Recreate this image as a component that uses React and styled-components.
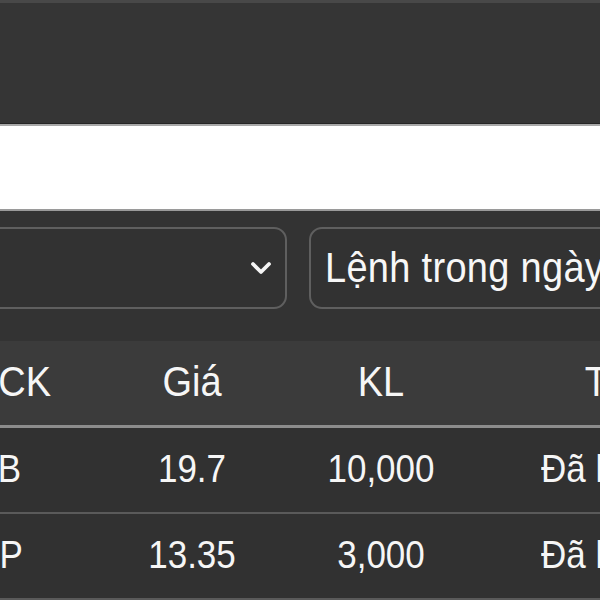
import React from "react";
import styled, { createGlobalStyle } from "styled-components";

const Global = createGlobalStyle`
  html, body {
    margin: 0;
    padding: 0;
    background: #333333;
    overflow: hidden;
    font-family: "Liberation Sans", Arial, sans-serif;
  }
`;

const Page = styled.div`
  width: 600px;
  height: 600px;
  overflow: hidden;
  background: #333333;
  display: flex;
  flex-direction: column;
`;

const TopBar = styled.div`
  height: 120px;
  flex: none;
  background: #353535;
  border-top: 3px solid #484848;
  border-bottom: 1px solid #252525;
`;

const WhiteBand = styled.div`
  height: 83px;
  flex: none;
  background: #ffffff;
  border-top: 2px solid #a8a8a8;
  border-bottom: 2px solid #9a9a9a;
`;

const Content = styled.div`
  margin-left: -70px;
  width: 810px;
  display: flex;
  flex-direction: column;
  padding-top: 16px;
  gap: 32px;
`;

const FilterRow = styled.div`
  display: grid;
  grid-template-columns: 357px 358px;
  gap: 22px;
`;

const Select = styled.div`
  height: 82px;
  box-sizing: border-box;
  border: 2px solid #5f5f5f;
  border-radius: 13px;
  background: #323232;
  display: flex;
  align-items: center;
  justify-content: ${(p) => (p.$chevron ? "flex-end" : "flex-start")};
  padding: 0 13px 0 14px;
  color: #f7f7f7;
  font-size: 38px;
  white-space: nowrap;
  overflow: hidden;
`;

const Tall = styled.span`
  display: inline-block;
  transform: scaleY(1.1);
  transform-origin: center;
  letter-spacing: ${(p) => p.$ls || "0"};
`;

const Chevron = () => (
  <svg width="22" height="14" viewBox="0 0 22 14">
    <polyline
      points="3,3 11,11 19,3"
      fill="none"
      stroke="#f5f5f5"
      strokeWidth="3.8"
      strokeLinecap="round"
      strokeLinejoin="round"
    />
  </svg>
);

const Table = styled.div`
  display: flex;
  flex-direction: column;
`;

const Row = styled.div`
  display: grid;
  grid-template-columns: 170px 184px 194px 260px;
  height: ${(p) => (p.$head ? "83px" : "82px")};
  padding-bottom: ${(p) => (p.$head ? "1px" : "2px")};
  align-items: center;
  background: ${(p) => (p.$head ? "#3b3b3b" : "#313131")};
  border-bottom: ${(p) => (p.$head ? "3px solid #8c8c8c" : "2px solid #5a5a5a")};
  color: #f6f6f6;
  font-size: ${(p) => (p.$head ? "38px" : "35px")};
  white-space: nowrap;
`;

const Cell = styled.div`
  text-align: ${(p) => p.$align || "center"};
  padding-left: ${(p) => p.$pad || "0"};
`;

const rows = [
  { code: "TCB", price: "19.7", vol: "10,000", status: "Đã khớp" },
  { code: "DXP", price: "13.35", vol: "3,000", status: "Đã khớp" },
];

export default function App() {
  return (
    <>
      <Global />
      <Page>
        <TopBar />
        <WhiteBand />
        <Content>
          <FilterRow>
            <Select $chevron>
              <Chevron />
            </Select>
            <Select>
              <Tall $ls="0.3px">Lệnh trong ngày</Tall>
            </Select>
          </FilterRow>
          <Table>
            <Row $head>
              <Cell $align="left" $pad="5px"><Tall>Mã CK</Tall></Cell>
              <Cell><Tall>Giá</Tall></Cell>
              <Cell><Tall>KL</Tall></Cell>
              <Cell><Tall>TT</Tall></Cell>
            </Row>
            {rows.map((r) => (
              <Row key={r.code}>
                <Cell $align="left" $pad="21px"><Tall>{r.code}</Tall></Cell>
                <Cell><Tall>{r.price}</Tall></Cell>
                <Cell><Tall>{r.vol}</Tall></Cell>
                <Cell><Tall>{r.status}</Tall></Cell>
              </Row>
            ))}
          </Table>
        </Content>
      </Page>
    </>
  );
}
